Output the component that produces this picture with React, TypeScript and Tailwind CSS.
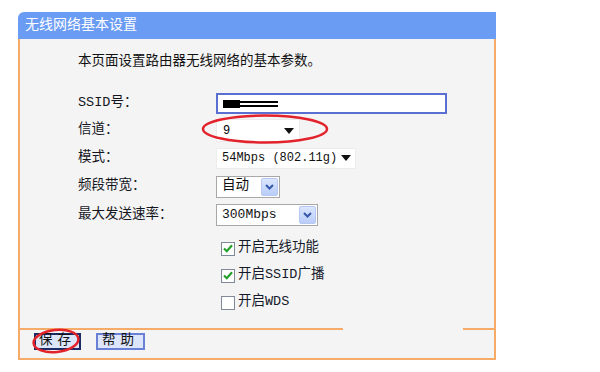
import { ReactNode } from 'react';

const cn = "font-['Liberation_Mono','Noto_Sans_CJK_SC',monospace]";

function Arrow() {
  return (
    <svg width="10" height="6" viewBox="0 0 10 6" className="shrink-0">
      <path d="M0 0 H10 L5 6 Z" fill="#111" />
    </svg>
  );
}

function XpButton() {
  return (
    <div className="flex h-[18px] w-[17px] items-center justify-center rounded-[2px] border border-[#b7c9f2] bg-gradient-to-b from-[#dbe6fd] to-[#b9cdf8]">
      <svg width="9" height="6" viewBox="0 0 9 6">
        <path d="M1 1 L4.5 4.5 L8 1" fill="none" stroke="#3558a8" strokeWidth="2" />
      </svg>
    </div>
  );
}

function Row({ label, h, children }: { label: string; h: string; children?: ReactNode }) {
  return (
    <div className={`flex items-center ${h}`}>
      <div className="w-[138px] shrink-0 text-[13.5px] text-[#14161e]">{label}</div>
      {children}
    </div>
  );
}

function Check({ checked, label }: { checked: boolean; label: string }) {
  return (
    <div className="flex h-[27px] items-center pl-[143px]">
      <div className="flex h-[14px] w-[14px] items-center justify-center border border-[#808a96] bg-white">
        {checked && (
          <svg width="10" height="9" viewBox="0 0 10 9">
            <path d="M1 4.5 L3.8 7.2 L9 1.2" fill="none" stroke="#23a02a" strokeWidth="2.2" />
          </svg>
        )}
      </div>
      <span className="ml-[3px] text-[13.5px] text-[#141a2a]">{label}</span>
    </div>
  );
}

export default function App() {
  return (
    <div className={`relative h-[372px] w-[600px] overflow-hidden bg-white ${cn}`}>
      <div className="ml-[18px] pt-[12px] w-[478px]">
        <div className="h-[27px] rounded-tl-[6px] bg-[#6b9cf4] pl-[7px] text-[14px] leading-[27px] text-white">
          无线网络基本设置
        </div>

        <div className="border-x-2 border-[#f6ab68] bg-[#f4f4f4] pl-[58px] pt-[15px] pb-[12px]">
          <div className="h-[16px] text-[13.5px] leading-[16px] text-[#121212]">本页面设置路由器无线网络的基本参数。</div>

          <div className="mt-[20px]">
            <Row label="SSID号：" h="h-[27px]">
              <div className="flex h-[21px] w-[231px] items-center border-2 border-[#5b6fd2] bg-white pl-[5px]">
                <div className="h-[8px] w-[17px] bg-black" />
                <div className="flex w-[38px] flex-col gap-[2px]">
                  <div className="h-[2px] bg-black" />
                  <div className="h-[2px] bg-black" />
                </div>
              </div>
            </Row>
            <Row label="信道：" h="h-[27px]">
              <div className="flex h-[23px] w-[84px] items-center justify-between border border-[#ececec] bg-white pl-[6px] pr-[5px] text-[12px]">
                <span>9</span>
                <Arrow />
              </div>
            </Row>
            <Row label="模式：" h="h-[28px]">
              <div className="flex h-[21px] w-[140px] items-center justify-between border border-[#ececec] bg-white pl-[5px] pr-[4px] text-[12px] text-[#111]">
                <span>54Mbps (802.11g)</span>
                <Arrow />
              </div>
            </Row>
            <Row label="频段带宽：" h="h-[29px]">
              <div className="flex h-[22px] w-[64px] items-center justify-between border border-[#a8a8a8] bg-white pl-[5px] pr-[1px] text-[13.5px] text-[#111]">
                <span>自动</span>
                <XpButton />
              </div>
            </Row>
            <Row label="最大发送速率：" h="h-[28px]">
              <div className="flex h-[22px] w-[102px] items-center justify-between border border-[#a8a8a8] bg-white pl-[5px] pr-[1px] text-[13px] text-[#111]">
                <span>300Mbps</span>
                <XpButton />
              </div>
            </Row>
          </div>

          <div className="mt-[6px]">
            <Check checked label="开启无线功能" />
            <Check checked label="开启SSID广播" />
            <Check checked={false} label="开启WDS" />
          </div>
        </div>

        <div className="flex h-[2px] bg-[#f4f4f4]">
          <div className="w-[325px] bg-[#f6ab68]" />
          <div className="w-[120px]" />
          <div className="flex-1 bg-[#f6ab68]" />
        </div>

        <div className="flex h-[30px] items-start gap-[15px] border-x-2 border-b-2 border-[#f6ab68] bg-[#f4f4f4] pl-[14px] pt-[3px]">
          <div className="flex h-[17px] w-[47px] items-center justify-center border-2 border-[#1c2a66] bg-[#dde5fb] text-[13.5px] tracking-[5px] text-[#111]">
            保存
          </div>
          <div className="flex h-[17px] w-[49px] items-center justify-center border-2 border-[#6a7fd6] bg-[#dde5fb] text-[13.5px] tracking-[5px] text-[#111]">
            帮助
          </div>
        </div>
      </div>

      <svg className="pointer-events-none absolute left-0 top-0" width="600" height="372">
        <ellipse cx="265" cy="129" rx="62" ry="13.5" fill="none" stroke="#e3232b" strokeWidth="2.5" />
        <ellipse cx="56" cy="341" rx="22.5" ry="11" fill="none" stroke="#e3232b" strokeWidth="2.5" transform="rotate(-6 56 341)" />
      </svg>
    </div>
  );
}
